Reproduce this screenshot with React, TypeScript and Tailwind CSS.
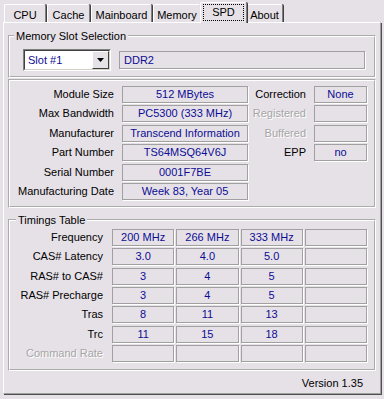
import React from 'react';

type InfoRow = {
  label: string;
  value: string;
  rLabel?: string;
  rValue?: string;
  rDisabled?: boolean;
};

const infoRows: InfoRow[] = [
  { label: 'Module Size', value: '512 MBytes', rLabel: 'Correction', rValue: 'None' },
  { label: 'Max Bandwidth', value: 'PC5300 (333 MHz)', rLabel: 'Registered', rValue: '', rDisabled: true },
  { label: 'Manufacturer', value: 'Transcend Information', rLabel: 'Buffered', rValue: '', rDisabled: true },
  { label: 'Part Number', value: 'TS64MSQ64V6J', rLabel: 'EPP', rValue: 'no' },
  { label: 'Serial Number', value: '0001F7BE' },
  { label: 'Manufacturing Date', value: 'Week 83, Year 05' },
];

const timings = [
  { label: 'Frequency', values: ['200 MHz', '266 MHz', '333 MHz', ''] },
  { label: 'CAS# Latency', values: ['3.0', '4.0', '5.0', ''] },
  { label: 'RAS# to CAS#', values: ['3', '4', '5', ''] },
  { label: 'RAS# Precharge', values: ['3', '4', '5', ''] },
  { label: 'Tras', values: ['8', '11', '13', ''] },
  { label: 'Trc', values: ['11', '15', '18', ''] },
  { label: 'Command Rate', values: ['', '', '', ''], disabled: true },
];

const tabs = [
  { name: 'CPU', w: 'w-[42px]' },
  { name: 'Cache', w: 'w-[43px]' },
  { name: 'Mainboard', w: 'w-[61px]' },
  { name: 'Memory', w: 'w-[48px]' },
  { name: 'SPD', w: 'w-[47px]', active: true },
  { name: 'About', w: 'w-[37px]' },
];

const disabledText = 'text-[#a6a6a6] [text-shadow:1px_1px_0_#fff]';
const groupBox = 'border-2 border-white [--tw-border-style:groove] p-0 m-0 min-w-0';

const ValueBox: React.FC<{ children?: React.ReactNode; className?: string }> = ({ children, className = '' }) => (
  <div
    className={`h-[17px] flex items-center justify-center border border-[#a0a0a0] shadow-[1px_1px_0_#fff] text-[#0c0c94] whitespace-nowrap ${className}`}
  >
    {children}
  </div>
);

export default function App() {
  return (
    <div className="w-[384px] h-[399px] bg-[#e6e1e7] font-['Liberation_Sans',Arial,sans-serif] text-[11px] leading-[13px] text-black px-[3px] pt-[2px] overflow-hidden">
      {/* tab strip */}
      <div className="flex items-end gap-[1px] h-[21px] pl-[1px]">
        {tabs.map(t =>
          t.active ? (
            <div
              key={t.name}
              className={`${t.w} -mx-[2px] h-[21px] relative z-10 bg-[#e6e1e7] border-t border-l border-white border-r border-r-[#808080] shadow-[1px_0_0_#404040] rounded-t-[2px] flex justify-center pt-[1px]`}
            >
              <span className="w-[41px] h-[17px] border border-dotted border-black flex items-center justify-center">{t.name}</span>
            </div>
          ) : (
            <div
              key={t.name}
              className={`${t.w} h-[18px] mb-[1px] bg-[#e6e1e7] border-t border-l border-white border-r border-r-[#808080] shadow-[1px_0_0_#404040] rounded-t-[2px] flex items-center justify-center pt-[3px]`}
            >
              {t.name}
            </div>
          )
        )}
      </div>

      {/* panel */}
      <div className="-mt-[1px] h-[372px] border border-t-white border-l-white border-r-[#a0a0a0] border-b-[#a0a0a0] shadow-[1px_1px_0_#505050] px-[4px] pt-[7px] flex flex-col">
        <fieldset className={groupBox}>
          <legend className="ml-[4px] px-[2px] leading-[12px]">Memory Slot Selection</legend>
          <div className="flex items-center pl-[13px] pt-[7px] pb-[5px]">
            <div className="w-[88px] h-[22px] border border-t-[#808080] border-l-[#808080] border-r-white border-b-white">
              <div className="h-full border border-t-[#404040] border-l-[#404040] border-r-[#d4d0c8] border-b-[#d4d0c8] bg-white flex items-center">
                <span className="flex-1 pl-[3px] text-[#0c0c94]">Slot #1</span>
                <div className="w-[17px] h-full bg-[#e6e1e7] border border-t-white border-l-white border-r-[#404040] border-b-[#404040] flex items-center justify-center">
                  <svg width="7" height="4" viewBox="0 0 7 4">
                    <path d="M0 0h7L3.5 4z" fill="#000" />
                  </svg>
                </div>
              </div>
            </div>
            <div className="ml-[8px] w-[246px] h-[18px] border border-[#a0a0a0] shadow-[1px_1px_0_#fff] text-[#0c0c94] flex items-center pl-[4px]">
              DDR2
            </div>
          </div>
        </fieldset>

        <fieldset className={`${groupBox} mt-[1px]`}>
          <div className="flex flex-col gap-[2.4px] pt-[5px] pb-[6px]">
            {infoRows.map(r => (
              <div key={r.label} className="flex items-center h-[17px]">
                <div className="w-[104px] text-right whitespace-nowrap">{r.label}</div>
                <ValueBox className="ml-[8px] w-[126px]">{r.value}</ValueBox>
                {r.rLabel && (
                  <>
                    <div className={`w-[58px] text-right ${r.rDisabled ? disabledText : ''}`}>{r.rLabel}</div>
                    <ValueBox className="ml-[8px] w-[53px]">{r.rValue}</ValueBox>
                  </>
                )}
              </div>
            ))}
          </div>
        </fieldset>

        <fieldset className={`${groupBox} mt-[6px]`}>
          <legend className="ml-[6px] px-[2px] leading-[12px]">Timings Table</legend>
          <div className="flex flex-col gap-[2.33px] pt-[3px] pb-[7px]">
            {timings.map(r => (
              <div key={r.label} className="flex items-center h-[17px]">
                <div className={`w-[93px] text-right whitespace-nowrap ${r.disabled ? disabledText : ''}`}>{r.label}</div>
                <div className="ml-[9px] w-[255px] flex gap-[2px]">
                  {r.values.map((v, i) => (
                    <ValueBox key={i} className="flex-1">
                      {v}
                    </ValueBox>
                  ))}
                </div>
              </div>
            ))}
          </div>
        </fieldset>

        <div className="mt-[6px] pr-[13px] text-right">Version 1.35</div>
      </div>
    </div>
  );
}
